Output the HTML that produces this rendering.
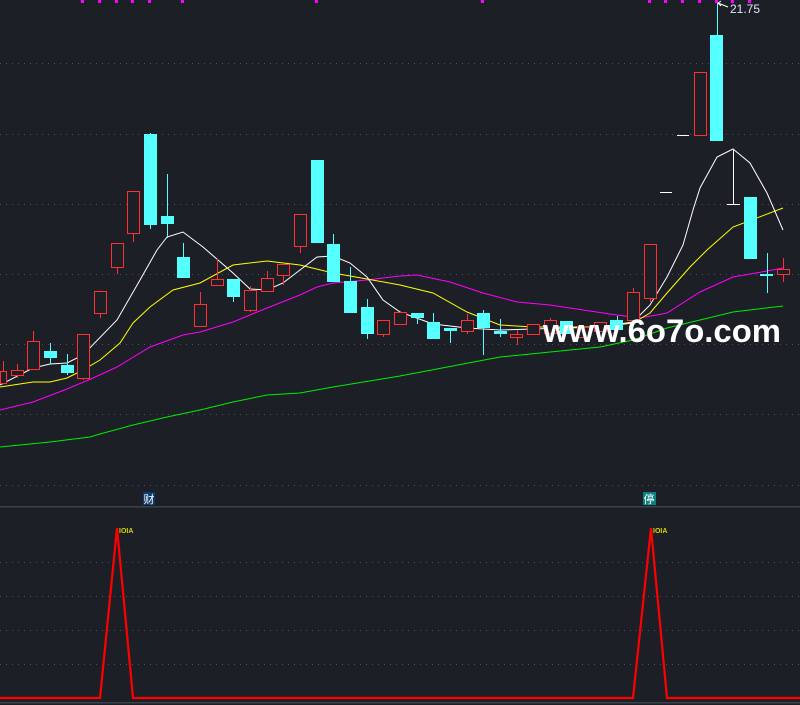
<!DOCTYPE html>
<html><head><meta charset="utf-8"><style>
html,body{margin:0;padding:0;background:#1c1f26;width:800px;height:705px;overflow:hidden}
svg{display:block}
</style></head><body>
<svg width="800" height="705" viewBox="0 0 800 705" xmlns="http://www.w3.org/2000/svg" shape-rendering="crispEdges">
<rect width="800" height="705" fill="#1c1f26"/>
<g stroke="#4a4f5a" stroke-width="1" stroke-dasharray="1,5">
<line x1="0" y1="63.5" x2="800" y2="63.5"/><line x1="0" y1="134.5" x2="800" y2="134.5"/>
<line x1="0" y1="204.5" x2="800" y2="204.5"/><line x1="0" y1="274.5" x2="800" y2="274.5"/>
<line x1="0" y1="344.5" x2="800" y2="344.5"/><line x1="0" y1="414.5" x2="800" y2="414.5"/>
<line x1="0" y1="485.5" x2="800" y2="485.5"/>
<line x1="0" y1="562.5" x2="800" y2="562.5"/><line x1="0" y1="596.5" x2="800" y2="596.5"/>
<line x1="0" y1="630.5" x2="800" y2="630.5"/><line x1="0" y1="664.5" x2="800" y2="664.5"/>
</g>
<line x1="0" y1="506.5" x2="800" y2="506.5" stroke="#3c414c" stroke-width="1.5"/>
<line x1="0" y1="702.5" x2="800" y2="702.5" stroke="#3c414c" stroke-width="1.5"/>
<g fill="#ff00ff">
<rect x="81" y="0" width="3" height="3"/><rect x="98" y="0" width="3" height="3"/><rect x="115" y="0" width="3" height="3"/><rect x="131" y="0" width="3" height="3"/><rect x="148" y="0" width="3" height="3"/><rect x="181" y="0" width="3" height="3"/><rect x="315" y="0" width="3" height="3"/><rect x="481" y="0" width="3" height="3"/><rect x="648" y="0" width="3" height="3"/><rect x="664" y="0" width="3" height="3"/><rect x="681" y="0" width="3" height="3"/><rect x="698" y="0" width="3" height="3"/><rect x="715" y="0" width="3" height="3"/><rect x="731" y="0" width="3" height="3"/><rect x="748" y="0" width="3" height="3"/>
</g>
<g fill="none" stroke-width="1" shape-rendering="auto">
<polyline stroke="#00ee00" points="0,447 50,442 90,437 100,434 133,425 167,417 200,410 233,402 267,395 300,393 333,387 400,376 500,357 600,347 633,340 667,328 700,320 733,312 783,306"/>
<polyline stroke="#ff00ff" points="0,410 33,402 67,389 93,378 117,367 150,347 183,335 200,332 233,322 267,308 300,295 317,287 333,283 367,280 400,276 417,275 450,282 483,293 517,302 550,305 583,310 617,315 640,318 667,313 700,292 733,277 767,271 783,268"/>
<polyline stroke="#ffff00" points="0,387 33,382 50,382 67,378 83,370 100,360 120,343 133,323 150,307 173,290 200,283 233,265 267,261 300,265 333,273 367,279 400,285 433,293 467,312 500,325 533,327 600,327 633,323 650,313 667,293 690,267 707,250 733,227 783,208"/>
<polyline stroke="#ffffff" points="0,385 33,368 50,364 67,363 83,355 117,320 140,280 157,250 167,237 183,232 203,247 233,273 250,289 267,290 283,283 300,270 317,257 333,256 350,263 367,277 383,300 400,312 433,324 467,328 500,330 533,329 600,327 633,322 650,305 667,277 683,245 693,210 700,188 717,157 733,149 750,163 767,193 783,230"/>
</g>
<g stroke="#ff3030" stroke-width="1.2" fill="#1c1f26">
<line x1="3.5" y1="361" x2="3.5" y2="371"/><rect x="0.5" y="371.5" width="6" height="12"/>
<line x1="17.5" y1="364" x2="17.5" y2="378"/><rect x="11.5" y="370.5" width="12" height="5"/>
<line x1="33.5" y1="331" x2="33.5" y2="341"/><rect x="27.5" y="341.5" width="12" height="28"/>
<line x1="83.5" y1="378" x2="83.5" y2="380"/><rect x="77.5" y="334.5" width="12" height="44"/>
<line x1="100.5" y1="313" x2="100.5" y2="318"/><rect x="94.5" y="291.5" width="12" height="22"/>
<line x1="117.5" y1="267" x2="117.5" y2="274"/><rect x="111.5" y="243.5" width="12" height="24"/>
<line x1="133.5" y1="233" x2="133.5" y2="242"/><rect x="127.5" y="191.5" width="12" height="42"/>
<line x1="200.5" y1="292" x2="200.5" y2="304"/><rect x="194.5" y="304.5" width="12" height="22"/>
<line x1="217.5" y1="259" x2="217.5" y2="279"/><rect x="211.5" y="279.5" width="12" height="6"/>
<line x1="250.5" y1="286" x2="250.5" y2="312"/><rect x="244.5" y="290.5" width="12" height="20"/>
<line x1="267.5" y1="271" x2="267.5" y2="278"/><rect x="261.5" y="278.5" width="12" height="13"/>
<line x1="283.5" y1="271" x2="283.5" y2="285"/><rect x="277.5" y="264.5" width="12" height="11"/>
<line x1="300.5" y1="246" x2="300.5" y2="253"/><rect x="294.5" y="214.5" width="12" height="32"/>
<line x1="383.5" y1="334" x2="383.5" y2="337"/><rect x="377.5" y="320.5" width="12" height="14"/>
<rect x="394.5" y="312.5" width="12" height="12"/>
<line x1="467.5" y1="314" x2="467.5" y2="334"/><rect x="461.5" y="320.5" width="12" height="11"/>
<line x1="517.5" y1="330" x2="517.5" y2="345"/><rect x="510.5" y="334.5" width="12" height="3"/>
<rect x="527.5" y="324.5" width="12" height="10"/>
<line x1="550.5" y1="318" x2="550.5" y2="320"/><rect x="544.5" y="320.5" width="12" height="13"/>
<rect x="577.5" y="327.5" width="12" height="10"/>
<rect x="594.5" y="322.5" width="12" height="9"/>
<line x1="633.5" y1="288" x2="633.5" y2="292"/><rect x="627.5" y="292.5" width="12" height="28"/>
<line x1="650.5" y1="298" x2="650.5" y2="302"/><rect x="644.5" y="244.5" width="12" height="54"/>
<rect x="694.5" y="72.5" width="12" height="63"/>
<line x1="783.5" y1="258" x2="783.5" y2="282"/><rect x="777.5" y="269.5" width="12" height="5"/>
</g>
<g fill="#55ffff" stroke="#55ffff" stroke-width="1">
<line x1="50.5" y1="343" x2="50.5" y2="364"/><rect x="44" y="351" width="13" height="7" stroke="none"/>
<line x1="67.5" y1="354" x2="67.5" y2="375"/><rect x="61" y="365" width="13" height="8" stroke="none"/>
<line x1="150.5" y1="133" x2="150.5" y2="229"/><rect x="144" y="134" width="13" height="91" stroke="none"/>
<line x1="167.5" y1="174" x2="167.5" y2="238"/><rect x="161" y="216" width="13" height="8" stroke="none"/>
<line x1="183.5" y1="243" x2="183.5" y2="278"/><rect x="177" y="257" width="13" height="21" stroke="none"/>
<line x1="233.5" y1="279" x2="233.5" y2="302"/><rect x="227" y="279" width="13" height="18" stroke="none"/>
<line x1="317.5" y1="160" x2="317.5" y2="243"/><rect x="311" y="160" width="13" height="83" stroke="none"/>
<line x1="333.5" y1="234" x2="333.5" y2="282"/><rect x="327" y="244" width="13" height="38" stroke="none"/>
<line x1="350.5" y1="267" x2="350.5" y2="313"/><rect x="344" y="281" width="13" height="32" stroke="none"/>
<line x1="367.5" y1="299" x2="367.5" y2="339"/><rect x="361" y="307" width="13" height="27" stroke="none"/>
<line x1="417.5" y1="313" x2="417.5" y2="324"/><rect x="411" y="313" width="13" height="5" stroke="none"/>
<line x1="433.5" y1="313" x2="433.5" y2="339"/><rect x="427" y="322" width="13" height="17" stroke="none"/>
<line x1="450.5" y1="328" x2="450.5" y2="343"/><rect x="444" y="328" width="13" height="3" stroke="none"/>
<line x1="483.5" y1="310" x2="483.5" y2="355"/><rect x="477" y="313" width="13" height="15" stroke="none"/>
<line x1="500.5" y1="319" x2="500.5" y2="337"/><rect x="494" y="331" width="13" height="3" stroke="none"/>
<rect x="560" y="321" width="13" height="13" stroke="none"/>
<line x1="617.5" y1="316" x2="617.5" y2="330"/><rect x="610" y="320" width="13" height="10" stroke="none"/>
<line x1="717.5" y1="3" x2="717.5" y2="141"/><rect x="710" y="35" width="13" height="106" stroke="none"/>
<rect x="744" y="197" width="13" height="62" stroke="none"/>
<line x1="767.5" y1="253" x2="767.5" y2="293"/><rect x="760" y="274" width="13" height="2" stroke="none"/>
</g>
<g stroke="#ffffff" stroke-width="1">
<line x1="660" y1="192.5" x2="672" y2="192.5"/>
<line x1="677" y1="135.5" x2="689" y2="135.5"/>
<line x1="733.5" y1="150" x2="733.5" y2="204"/><line x1="727" y1="204.5" x2="740" y2="204.5"/>
<line x1="718" y1="3" x2="728" y2="7" shape-rendering="auto"/><line x1="718" y1="3" x2="721" y2="1" shape-rendering="auto"/><line x1="718" y1="3" x2="721" y2="6" shape-rendering="auto"/>
</g>
<text x="730" y="13" font-family="Liberation Sans, sans-serif" font-size="12" fill="#dde6ff">21.75</text>
<text x="543" y="342" font-family="Liberation Sans, sans-serif" font-weight="bold" font-size="32" fill="#ffffff" textLength="238" lengthAdjust="spacingAndGlyphs">www.6o7o.com</text>
<rect x="143" y="492" width="12" height="13" fill="#0c3a6e"/>
<text x="143.5" y="503" font-family="Liberation Sans, Noto Sans CJK SC, sans-serif" font-size="11" fill="#ffffff">财</text>
<rect x="643" y="492" width="13" height="13" fill="#0c8080"/>
<text x="643.5" y="503" font-family="Liberation Sans, Noto Sans CJK SC, sans-serif" font-size="11" fill="#ffffff">停</text>
<polyline fill="none" stroke="#ff0000" stroke-width="2.2" shape-rendering="auto" points="0,698 100,698 117,528 133,698 633,698 651,528 667,698 800,698"/>
<text x="119" y="533" font-family="Liberation Sans, sans-serif" font-size="7" font-weight="bold" fill="#d4d400">IOIA</text>
<text x="653" y="533" font-family="Liberation Sans, sans-serif" font-size="7" font-weight="bold" fill="#d4d400">IOIA</text>
</svg>
</body></html>
